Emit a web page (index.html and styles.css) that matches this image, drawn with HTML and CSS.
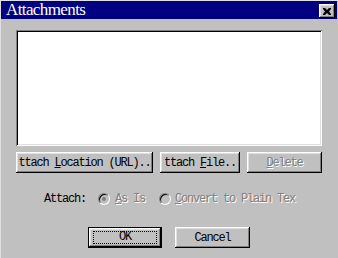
FILE: index.html
```html
<!DOCTYPE html>
<html>
  <head>
    <title>Attachments</title>
    <link rel="stylesheet" href="styles.css">
  </head>
  <body>
    <div class="window">
      <div class="titlebar">
        <span class="title">Attachments</span>
        <span class="close-btn">
          <svg width="8" height="7" viewBox="0 0 8 7">
            <path d="M0 0h2l2 2 2-2h2v1l-2 2.5 2 2.5v1h-2l-2-2-2 2h-2v-1l2-2.5-2-2.5z" fill="#000"/>
          </svg>
        </span>
      </div>
      <div class="content">
        <div class="listbox"></div>

        <div class="btn-row">
          <div class="btn btn-location"><span>ttach <u>L</u>ocation (URL)..</span></div>
          <div class="btn btn-file"><span>ttach <u>F</u>ile..</span></div>
          <div class="btn btn-delete disabled"><span><u>D</u>elete</span></div>
        </div>

        <div class="attach-row">
          <span class="attach-label">Attach:</span>
          <span class="radio checked"></span>
          <span class="radio-text disabled"><u>A</u>s Is</span>
          <span class="radio radio-two"></span>
          <span class="radio-text disabled"><u>C</u>onvert to Plain Tex</span>
        </div>

        <div class="footer-row">
          <div class="btn btn-ok"><span class="focus">OK</span></div>
          <div class="btn btn-cancel"><span>Cancel</span></div>
        </div>
      </div>
    </div>
  </body>
</html>
```

FILE: styles.css
```css
/* Dialog frame */
body {
  margin: 0;
  background-color: #c0c0c0;
  width: 338px;
  height: 258px;
  overflow: hidden;
}

.window {
  border-top: 1px solid #dfdfdf;
  border-left: 1px solid #dfdfdf;
  height: 257px;
  font-family: "Liberation Mono", "DejaVu Sans Mono", monospace;
  font-size: 12px;
  letter-spacing: -1.2px;
  color: #000;
}

/* Title bar */
.titlebar {
  width: 336px;
  height: 18px;
  background-color: #000080;
  display: flex;
  align-items: center;
  justify-content: space-between;
}

.title {
  font-family: "Liberation Serif", "Times New Roman", serif;
  font-size: 17px;
  letter-spacing: -0.6px;
  color: #fff;
  margin-left: 5px;
  line-height: 18px;
}

.close-btn {
  width: 16px;
  height: 14px;
  margin-right: 2px;
  margin-top: 2px;
  background-color: #c0c0c0;
  box-shadow: inset -1px -1px #000, inset 1px 1px #fff, inset -2px -2px #808080, inset 2px 2px #dfdfdf;
  display: flex;
  align-items: center;
  justify-content: center;
}

/* Body of the dialog */
.content {
  padding: 11px 15px 0 15px;
}

.listbox {
  width: 306px;
  height: 116px;
  box-sizing: border-box;
  background-color: #fff;
  box-shadow: inset 1px 1px #808080, inset -1px -1px #fff, inset 2px 2px #000, inset -2px -2px #dfdfdf;
}

.btn {
  height: 21px;
  box-sizing: border-box;
  background-color: #c0c0c0;
  box-shadow: inset -1px -1px #000, inset 1px 1px #fff, inset -2px -2px #808080, inset 2px 2px #dfdfdf;
  display: flex;
  align-items: center;
  justify-content: center;
  white-space: pre;
  overflow: hidden;
}

.btn-row {
  display: flex;
  gap: 7px;
  margin-top: 6px;
}

.btn-location { width: 137px; }
.btn-file { width: 80px; }
.btn-delete { width: 75px; }

.disabled {
  color: #808080;
  text-shadow: 1px 1px #fff;
}

/* Attach options */
.attach-row {
  display: flex;
  align-items: center;
  height: 14px;
  margin-top: 19px;
  padding-left: 28px;
  white-space: pre;
}

.radio {
  width: 12px;
  height: 12px;
  box-sizing: border-box;
  border-radius: 50%;
  border: 1px solid;
  border-color: #808080 #fff #fff #808080;
  background-color: #c0c0c0;
  box-shadow: inset 1px 1px #000;
  margin-left: 12px;
  margin-right: 5px;
  display: flex;
  align-items: center;
  justify-content: center;
}

.radio.checked::after {
  content: "";
  width: 4px;
  height: 4px;
  border-radius: 50%;
  background-color: #808080;
}

.radio-two {
  margin-left: 14px;
  margin-right: 4px;
}

/* OK / Cancel */
.footer-row {
  display: flex;
  gap: 13px;
  margin-top: 21px;
  padding-left: 72px;
}

.btn-ok {
  width: 74px;
  border: 1px solid #000;
}

.focus {
  width: 64px;
  height: 13px;
  box-sizing: border-box;
  border: 1px dotted #000;
  text-align: center;
  line-height: 11px;
}

.btn-cancel { width: 75px; }
```
